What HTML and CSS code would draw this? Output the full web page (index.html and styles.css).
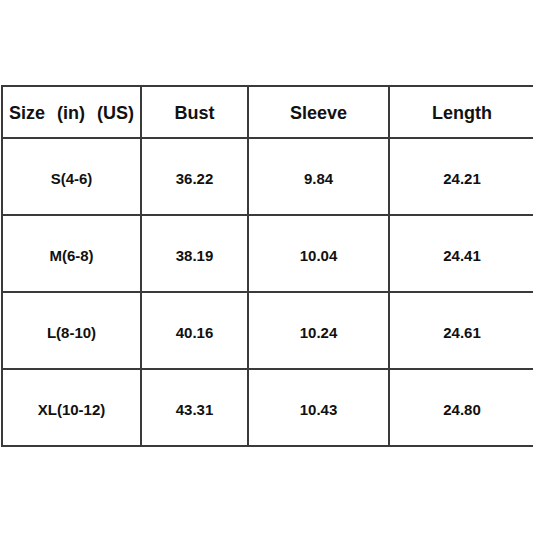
FILE: index.html
```html
<!DOCTYPE html>
<html>
<head>
<meta charset="utf-8">
<link rel="stylesheet" href="styles.css">
</head>
<body>
<table class="size-table">
  <colgroup>
    <col class="c1"><col class="c2"><col class="c3"><col class="c4">
  </colgroup>
  <thead>
    <tr class="head">
      <th class="first">Size&nbsp;&nbsp;(in)&nbsp;&nbsp;(US)</th>
      <th>Bust</th>
      <th>Sleeve</th>
      <th>Length</th>
    </tr>
  </thead>
  <tbody>
    <tr><td>S(4-6)</td><td>36.22</td><td>9.84</td><td>24.21</td></tr>
    <tr><td>M(6-8)</td><td>38.19</td><td>10.04</td><td>24.41</td></tr>
    <tr><td>L(8-10)</td><td>40.16</td><td>10.24</td><td>24.61</td></tr>
    <tr><td>XL(10-12)</td><td>43.31</td><td>10.43</td><td>24.80</td></tr>
  </tbody>
</table>
</body>
</html>
```
FILE: styles.css
```css
html, body {
  margin: 0;
  padding: 0;
  background: #fff;
}
body {
  width: 533px;
  height: 533px;
  overflow: hidden;
  font-family: "Liberation Sans", Arial, sans-serif;
  color: #111;
}
.size-table {
  border-collapse: collapse;
  table-layout: fixed;
  width: 533px;
  margin: 85px 0 0 1px;
}
.c1 { width: 139px; }
.c2 { width: 107px; }
.c3 { width: 141px; }
.c4 { width: 146px; }
.size-table th,
.size-table td {
  border: 2px solid #3a3a3a;
  text-align: center;
  vertical-align: middle;
  padding: 0;
}
.size-table th {
  height: 48px;
  padding-top: 2px;
  font-size: 18px;
  font-weight: bold;
}
.size-table th.first {
  text-align: left;
  padding-left: 6px;
  word-spacing: 1px;
}
.size-table td {
  height: 71px;
  font-size: 15px;
  font-weight: bold;
  padding-top: 4px;
}
```
